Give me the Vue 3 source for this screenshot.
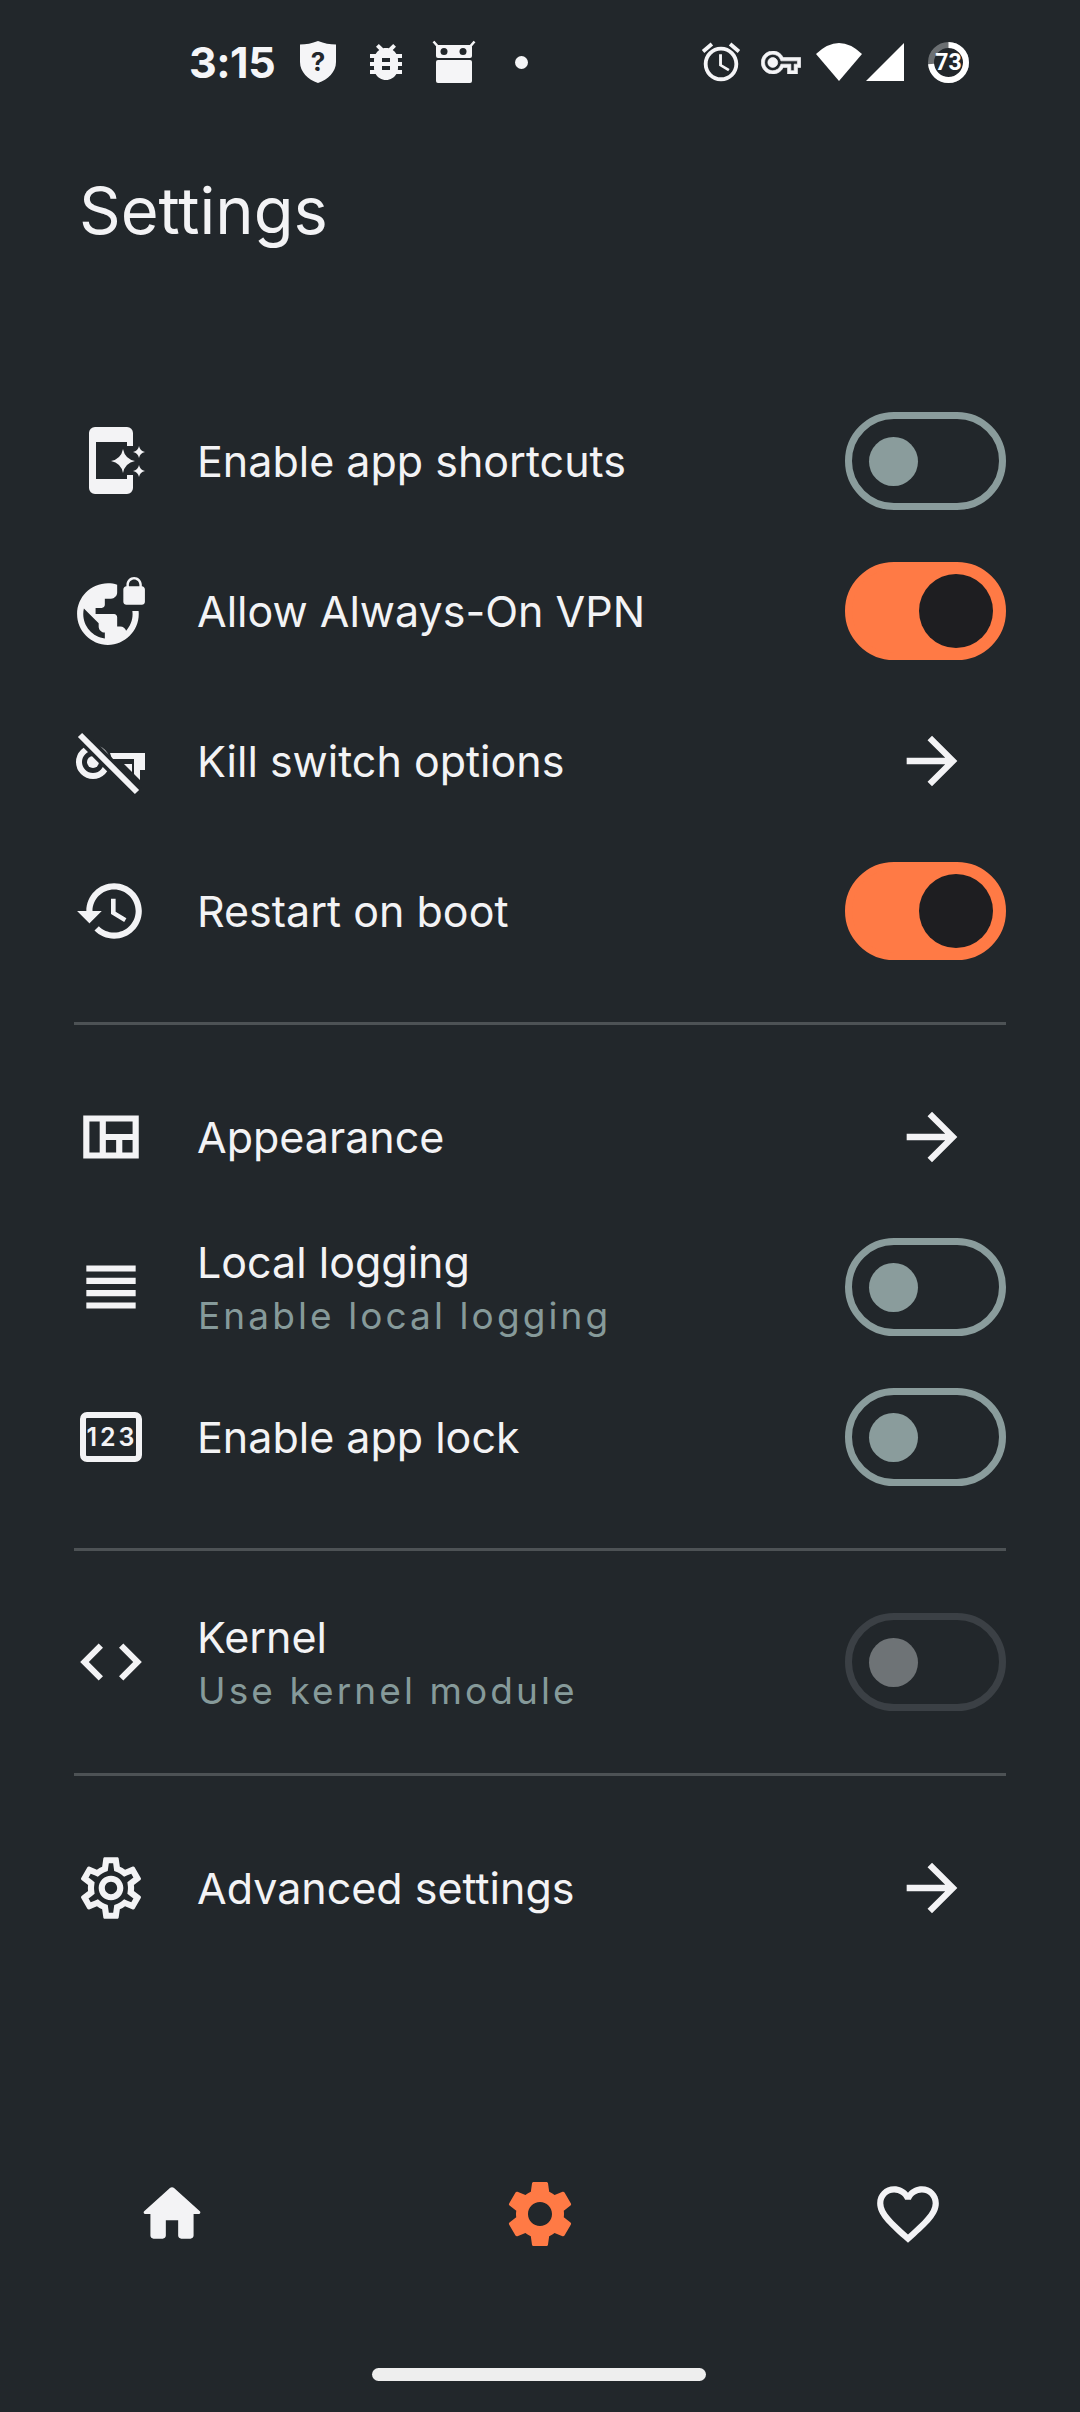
<script setup>
//------ data ------
const arrowPath = 'M12 4l-1.41 1.41L16.17 11H4v2h12.17l-5.58 5.59L12 20l8-8z'

const icons = {
  vpn: 'M22 4v-.5C22 2.12 20.88 1 19.5 1S17 2.12 17 3.5V4c-.55 0-1 .45-1 1v4c0 .55.45 1 1 1h5c.55 0 1-.45 1-1V5c0-.55-.45-1-1-1zm-.8 0h-3.4v-.5c0-.94.76-1.7 1.7-1.7s1.7.76 1.7 1.7V4zm-2.28 8c.04.33.08.66.08 1 0 2.08-.8 3.97-2.1 5.39-.26-.81-1-1.39-1.9-1.39h-1v-3c0-.55-.45-1-1-1H7v-2h2c.55 0 1-.45 1-1V8h2c1.1 0 2-.9 2-2V3.46c-.95-.3-1.95-.46-3-.46C5.48 3 1 7.48 1 13s4.48 10 10 10 10-4.48 10-10c0-.34-.02-.67-.05-1h-2.03zM10 20.93c-3.95-.49-7-3.85-7-7.93 0-.62.08-1.21.21-1.79L8 16v1c0 1.1.9 2 2 2v1.93z',
  history: 'M13 3c-4.97 0-9 4.03-9 9H1l3.89 3.89.07.14L9 12H6c0-3.87 3.13-7 7-7s7 3.13 7 7-3.13 7-7 7c-1.93 0-3.68-.79-4.94-2.06l-1.42 1.42C8.27 19.99 10.51 21 13 21c4.97 0 9-4.03 9-9s-4.03-9-9-9zm-1 5v5l4.28 2.54.72-1.21-3.5-2.08V8H12z',
  quilt: 'M3 5v14h18V5H3zm5.33 12H5V7h3.33v10zm5.34 0h-3.34v-4h3.34v4zM19 17h-3.33v-4H19v4zm0-6h-8.67V7H19v4z',
  lines: 'M4 15h16v-2H4v2zm0 4h16v-2H4v2zm0-8h16V9H4v2zm0-6v2h16V5H4z',
  code: 'M9.4 16.6L4.8 12l4.6-4.6L8 6l-6 6 6 6 1.4-1.4zm5.2 0l4.6-4.6-4.6-4.6L16 6l6 6-6 6-1.4-1.4z',
  gear: 'M19.43 12.98c.04-.32.07-.64.07-.98 0-.34-.03-.66-.07-.98l2.11-1.65c.19-.15.24-.42.12-.64l-2-3.46c-.09-.16-.26-.25-.44-.25-.06 0-.12.01-.17.03l-2.49 1c-.52-.4-1.08-.73-1.69-.98l-.38-2.65C14.46 2.18 14.25 2 14 2h-4c-.25 0-.46.18-.49.42l-.38 2.65c-.61.25-1.17.59-1.69.98l-2.49-1c-.06-.02-.12-.03-.18-.03-.17 0-.34.09-.43.25l-2 3.46c-.13.22-.07.49.12.64l2.11 1.65c-.04.32-.07.65-.07.98 0 .33.03.66.07.98l-2.11 1.65c-.19.15-.24.42-.12.64l2 3.46c.09.16.26.25.44.25.06 0 .12-.01.17-.03l2.49-1c.52.4 1.08.73 1.69.98l.38 2.65c.03.24.24.42.49.42h4c.25 0 .46-.18.49-.42l.38-2.65c.61-.25 1.17-.59 1.69-.98l2.49 1c.06.02.12.03.18.03.17 0 .34-.09.43-.25l2-3.46c.12-.22.07-.49-.12-.64l-2.11-1.65zm-1.98-1.71c.04.31.05.52.05.73 0 .21-.02.43-.05.73l-.14 1.13.89.7 1.08.84-.7 1.21-1.27-.51-1.04-.42-.9.68c-.43.32-.84.56-1.25.73l-1.06.43-.16 1.13-.2 1.35h-1.4l-.19-1.35-.16-1.13-1.06-.43c-.43-.18-.83-.41-1.23-.71l-.91-.7-1.06.43-1.27.51-.7-1.21 1.08-.84.89-.7-.14-1.13c-.03-.31-.05-.54-.05-.74s.02-.43.05-.73l.14-1.13-.89-.7-1.08-.84.7-1.21 1.27.51 1.04.42.9-.68c.43-.32.84-.56 1.25-.73l1.06-.43.16-1.13.2-1.35h1.39l.19 1.35.16 1.13 1.06.43c.43.18.83.41 1.23.71l.91.7 1.06-.43 1.27-.51.7 1.21-1.07.85-.89.7.14 1.13zM12 8c-2.21 0-4 1.79-4 4s1.79 4 4 4 4-1.79 4-4-1.79-4-4-4zm0 6c-1.1 0-2-.9-2-2s.9-2 2-2 2 .9 2 2-.9 2-2 2z',
}

const sections = [
  [
    { title: 'Enable app shortcuts', custom: 'shortcut', control: 'off' },
    { title: 'Allow Always-On VPN', icon: icons.vpn, control: 'on' },
    { title: 'Kill switch options', custom: 'keyoff', control: 'arrow' },
    { title: 'Restart on boot', icon: icons.history, control: 'on' },
  ],
  [
    { title: 'Appearance', icon: icons.quilt, control: 'arrow' },
    { title: 'Local logging', sub: 'Enable local logging', icon: icons.lines, control: 'off' },
    { title: 'Enable app lock', custom: 'pin', control: 'off' },
  ],
  [
    { title: 'Kernel', sub: 'Use kernel module', icon: icons.code, control: 'disabled' },
  ],
  [
    { title: 'Advanced settings', icon: icons.gear, control: 'arrow' },
  ],
]
</script>

<template>
  <div class="page">
    <!-- status bar -->
    <div class="statusbar">
      <div class="status-left">
        <span class="time">3:15</span>
        <svg class="st-shield" width="36" height="42" viewBox="0 0 36 42">
          <path d="M18 0C24 2.500 30 3.500 36 3.500V21C36 31 28 38.500 18 42 8 38.500 0 31 0 21V3.500C6 3.500 12 2.500 18 0z" fill="#f5f5f7" />
          <text x="18" y="30" text-anchor="middle" class="st-q">?</text>
        </svg>
        <svg class="st-bug" width="48" height="48" viewBox="0 0 24 24">
          <path fill="#f5f5f7" d="M20 8h-2.810c-.45-.78-1.070-1.450-1.820-1.960L17 4.410 15.590 3l-2.170 2.170C12.960 5.060 12.490 5 12 5c-.49 0-.96.060-1.410.17L8.410 3 7 4.410l1.620 1.630C7.880 6.550 7.260 7.220 6.810 8H4v2h2.090c-.05.33-.09.66-.09 1v1H4v2h2v1c0 .34.04.67.09 1H4v2h2.810c1.040 1.790 2.970 3 5.190 3s4.150-1.210 5.190-3H20v-2h-2.090c.05-.33.09-.66.09-1v-1h2v-2h-2v-1c0-.34-.04-.67-.09-1H20V8zm-6 8h-4v-2h4v2zm0-4h-4v-2h4v2z" />
        </svg>
        <svg class="st-droid" width="44" height="44" viewBox="0 0 44 44">
          <path d="M1.500 1.500L8 9M42.500 1.500L36 9" stroke="#f5f5f7" stroke-width="2.500" fill="none" />
          <rect x="4" y="5" width="36" height="13" rx="2" fill="#f5f5f7" />
          <rect x="4" y="20" width="36" height="23" rx="2" fill="#f5f5f7" />
          <circle cx="12" cy="11.500" r="3.500" fill="#22272b" />
          <circle cx="31" cy="11.500" r="3.500" fill="#22272b" />
        </svg>
        <span class="st-dot"></span>
      </div>
      <div class="status-right">
        <svg width="46" height="46" viewBox="0 0 24 24">
          <path fill="#f5f5f7" d="M22 5.720l-4.600-3.860-1.290 1.530 4.600 3.860L22 5.720zM7.880 3.390L6.600 1.860 2 5.710l1.290 1.530 4.590-3.850zM12.500 8H11v6l4.750 2.850.75-1.230-4-2.370V8zM12 4c-4.970 0-9 4.030-9 9s4.030 9 9 9 9-4.030 9-9-4.030-9-9-9zm0 16c-3.870 0-7-3.130-7-7s3.130-7 7-7 7 3.130 7 7-3.130 7-7 7z" />
        </svg>
        <svg class="st-key" width="40" height="23" viewBox="0 5 24 14">
          <path fill="#f5f5f7" stroke="#f5f5f7" stroke-width="0.400" d="M22 19h-6v-4h-2.680c-1.140 2.420-3.620 4-6.320 4-3.860 0-7-3.140-7-7s3.140-7 7-7c2.700 0 5.170 1.580 6.320 4H24v6h-2v4zm-4-2h2v-4h2v-2H11.940l-.23-.67C11.010 8.340 9.110 7 7 7c-2.760 0-5 2.240-5 5s2.240 5 5 5c2.110 0 4.010-1.340 4.710-3.330l.23-.67H18v4zM7 15c-1.650 0-3-1.350-3-3s1.350-3 3-3 3 1.350 3 3-1.350 3-3 3z" />
        </svg>
        <svg class="st-wifi" width="46" height="38" viewBox="0 0 46 38">
          <path d="M0 11Q23 -11 46 11L23 38z" fill="#fff" />
        </svg>
        <svg class="st-signal" width="38" height="38" viewBox="0 0 38 38">
          <path d="M0 38L38 0V38z" fill="#fff" />
        </svg>
        <svg class="st-battery" width="41" height="41" viewBox="0 0 41 41">
          <circle cx="20.500" cy="20.500" r="17.500" fill="none" stroke="#6b6f72" stroke-width="6" />
          <circle cx="20.500" cy="20.500" r="17.500" fill="none" stroke="#fff" stroke-width="6" stroke-dasharray="80.300 110" transform="rotate(-90 20.500 20.500)" />
          <text x="20.500" y="28" text-anchor="middle" class="st-batt">73</text>
        </svg>
      </div>
    </div>

    <h1 class="title">Settings</h1>

    <!-- settings list -->
    <div class="list">
      <div v-for="(section, s) in sections" :key="s" class="section">
        <div v-for="row in section" :key="row.title" class="row">
          <svg v-if="row.icon" class="row-icon" viewBox="0 0 24 24">
            <path :d="row.icon" />
          </svg>
          <svg v-else-if="row.custom === 'shortcut'" class="row-icon" viewBox="0 -1 74 74">
            <path d="M21 2H53a6 6 0 0 1 6 6V21H53V17H22V54H53V50H59V63a6 6 0 0 1-6 6H21a6 6 0 0 1-6-6V8a6 6 0 0 1 6-6z" />
            <path d="M49 24Q51 34 61 36 51 38 49 48 47 38 37 36 47 34 49 24z" />
            <path d="M65 21Q66 26 71 27 66 28 65 33 64 28 59 27 64 26 65 21z" />
            <path d="M65 40Q66 45 71 46 66 47 65 52 64 47 59 46 64 45 65 40z" />
          </svg>
          <svg v-else-if="row.custom === 'keyoff'" class="row-icon" viewBox="0 0 74 74">
            <circle cx="19" cy="38" r="14" fill="none" stroke="#f3f3f5" stroke-width="6" />
            <circle cx="19" cy="38" r="6" />
            <path d="M36 29H71V46H66V56L60 50V35H38z" />
            <path d="M50 40H58V48z" />
            <path d="M6 11L63 68" stroke="#22272b" stroke-width="13" />
            <path d="M6 11L63 68" stroke="#f3f3f5" stroke-width="6" />
          </svg>
          <svg v-else-if="row.custom === 'pin'" class="row-icon" viewBox="0 0 74 74">
            <rect x="9" y="15" width="56" height="44" rx="4" fill="none" stroke="#f3f3f5" stroke-width="6" />
            <text x="38" y="46" text-anchor="middle" class="pin-text">123</text>
          </svg>

          <div class="row-text">
            <div class="row-title">{{ row.title }}</div>
            <div v-if="row.sub" class="row-sub">{{ row.sub }}</div>
          </div>

          <svg v-if="row.control === 'arrow'" class="arrow" viewBox="0 0 24 24">
            <path :d="arrowPath" />
          </svg>
          <div v-else class="switch" :class="row.control">
            <span class="knob"></span>
          </div>
        </div>
      </div>
    </div>

    <!-- bottom nav -->
    <div class="nav">
      <svg class="nav-icon" viewBox="0 0 24 24">
        <path d="M10 19v-5h4v5c0 .55.45 1 1 1h3c.55 0 1-.45 1-1v-7h1.700c.46 0 .68-.57.33-.87L12.670 3.600c-.38-.34-.96-.34-1.340 0l-8.360 7.530c-.34.3-.13.87.33.87H5v7c0 .55.45 1 1 1h3c.55 0 1-.45 1-1z" />
      </svg>
      <svg class="nav-icon active" viewBox="0 0 24 24">
        <path d="M19.140 12.940c.04-.3.060-.61.060-.94 0-.32-.02-.64-.07-.94l2.030-1.580c.18-.14.23-.41.12-.61l-1.920-3.320c-.12-.22-.37-.29-.59-.22l-2.390.96c-.5-.38-1.030-.7-1.620-.94l-.36-2.540c-.04-.24-.24-.41-.48-.41h-3.840c-.24 0-.43.17-.47.41l-.36 2.540c-.59.24-1.130.57-1.620.94l-2.390-.96c-.22-.08-.47 0-.59.22L2.740 8.870c-.12.21-.08.47.12.61l2.030 1.580c-.05.3-.09.63-.09.94s.02.64.07.94l-2.030 1.580c-.18.14-.23.41-.12.61l1.920 3.320c.12.22.37.29.59.22l2.390-.96c.5.38 1.030.7 1.620.94l.36 2.540c.05.24.24.41.48.41h3.840c.24 0 .44-.17.47-.41l.36-2.540c.59-.24 1.130-.56 1.620-.94l2.390.96c.22.08.47 0 .59-.22l1.920-3.320c.12-.22.07-.47-.12-.61l-2.010-1.580zM12 15.600c-1.980 0-3.600-1.620-3.600-3.600s1.620-3.600 3.600-3.600 3.600 1.620 3.600 3.600-1.620 3.600-3.600 3.600z" />
      </svg>
      <svg class="nav-icon" viewBox="0 0 24 24">
        <path d="M16.500 3c-1.740 0-3.410.81-4.500 2.090C10.910 3.810 9.240 3 7.500 3 4.420 3 2 5.420 2 8.500c0 3.780 3.400 6.860 8.550 11.540L12 21.350l1.450-1.320C18.600 15.360 22 12.280 22 8.500 22 5.420 19.580 3 16.500 3zm-4.400 15.550l-.1.1-.1-.1C7.140 14.240 4 11.390 4 8.500 4 6.500 5.500 5 7.500 5c1.540 0 3.040.99 3.570 2.360h1.870C13.460 5.990 14.960 5 16.500 5c2 0 3.500 1.500 3.500 3.500 0 2.890-3.140 5.740-7.900 10.050z" />
      </svg>
    </div>

    <div class="home-indicator"></div>
  </div>
</template>

<style scoped>
.page {
  width: 1080px;
  height: 2412px;
  overflow: hidden;
  display: flex;
  flex-direction: column;
  background: #22272b;
  color: #f3f3f5;
  font-family: Inter, "Noto Sans", sans-serif;
}

/* status bar */
.statusbar {
  height: 124px;
  flex-shrink: 0;
  display: flex;
  align-items: center;
  justify-content: space-between;
  padding: 0 111px 0 189px;
  box-sizing: border-box;
}
.status-left,
.status-right {
  display: flex;
  align-items: center;
}
.time {
  font-size: 43px;
  font-weight: 700;
  width: 111px;
  letter-spacing: -0.5px;
  color: #f5f5f7;
}
.st-bug {
  margin-left: 26px;
}
.st-droid {
  margin-left: 22px;
}
.st-dot {
  width: 13px;
  height: 13px;
  border-radius: 50%;
  background: #f5f5f7;
  margin-left: 39px;
}
.st-q {
  font: 700 26px Inter, sans-serif;
  fill: #22272b;
}
.st-key {
  margin-left: 17px;
}
.st-wifi {
  margin-left: 15px;
}
.st-signal {
  margin-left: 4px;
}
.st-battery {
  margin-left: 24px;
}
.st-batt {
  font: 700 23px Roboto, sans-serif;
  fill: #fff;
}

.title {
  margin: 0;
  height: 174px;
  padding: 56px 0 0 79px;
  box-sizing: border-box;
  font-size: 65px;
  line-height: 62px;
  font-weight: 400;
  flex-shrink: 0;
}

/* rows */
.list {
  margin: 88px 74px 0;
}
.section {
  padding: 37px 0 36px;
  border-top: 3px solid #4d5255;
}
.section:first-child {
  border-top: none;
  padding-top: 0;
}
.section:nth-child(3) {
  padding-top: 36px;
}
.row {
  height: 150px;
  display: flex;
  align-items: center;
}
.row-icon {
  width: 74px;
  height: 74px;
  flex-shrink: 0;
  margin-right: 49px;
  fill: #f3f3f5;
}
.row-text {
  flex: 1;
  min-width: 0;
}
.row-title {
  font-size: 43px;
  line-height: 54px;
}
.row-sub {
  font-size: 37px;
  line-height: 46px;
  letter-spacing: 3.1px;
  margin: 4px 0 0 1px;
  color: #869a9a;
}
.pin-text {
  font: 600 25px Inter, sans-serif;
  letter-spacing: 3px;
  fill: #f3f3f5;
}
.arrow {
  width: 76px;
  height: 76px;
  fill: #f3f3f5;
  margin-right: 36px;
}

/* switches */
.switch {
  width: 161px;
  height: 98px;
  box-sizing: border-box;
  border-radius: 49px;
  border: 7px solid #8a9c9c;
  display: flex;
  align-items: center;
  padding-left: 17px;
}
.knob {
  width: 49px;
  height: 49px;
  border-radius: 50%;
  background: #8a9c9c;
}
.switch.on {
  background: #ff7a45;
  border-color: #ff7a45;
  justify-content: flex-end;
  padding: 0 6px 0 0;
}
.switch.on .knob {
  width: 74px;
  height: 74px;
  background: #1e1e21;
}
.switch.disabled {
  border-color: #3b4045;
}
.switch.disabled .knob {
  background: #6e7376;
}

/* bottom nav */
.nav {
  margin-top: auto;
  display: flex;
  justify-content: space-between;
  padding: 0 135px;
  height: 74px;
}
.nav-icon {
  width: 74px;
  height: 74px;
  fill: #f3f3f5;
}
.nav-icon.active {
  width: 80px;
  height: 80px;
  margin: -3px;
  fill: #ff7a45;
}
.home-indicator {
  width: 334px;
  height: 13px;
  border-radius: 7px;
  background: #eee;
  margin: 117px 0 31px 372px;
}
</style>

<style>
body {
  background: #22272b;
}
</style>
